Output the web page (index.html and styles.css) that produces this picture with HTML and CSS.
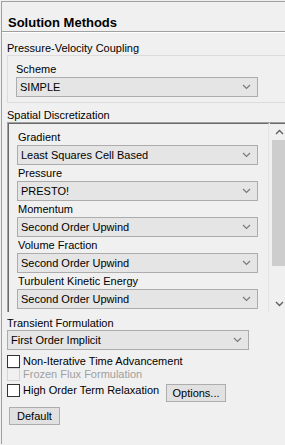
FILE: index.html
```html
<!DOCTYPE html>
<html lang="en">
<head>
  <meta charset="UTF-8" />
  <title>Solution Methods</title>
  <link rel="stylesheet" href="styles.css">
</head>
<body>
  <div class="page">
    <div class="title">Solution Methods</div>

    <div class="section-label">Pressure-Velocity Coupling</div>
    <div class="group">
      <div class="field-label">Scheme</div>
      <div class="combo wide"><span>SIMPLE</span><svg viewBox="0 0 9 6"><polyline points="1,1 4.5,4.5 8,1"/></svg></div>
    </div>

    <div class="section-label spatial">Spatial Discretization</div>
    <div class="scroll-panel">
      <div class="scroll-content">
        <div class="row-label">Gradient</div>
        <div class="combo"><span>Least Squares Cell Based</span><svg viewBox="0 0 9 6"><polyline points="1,1 4.5,4.5 8,1"/></svg></div>
        <div class="row-label">Pressure</div>
        <div class="combo"><span>PRESTO!</span><svg viewBox="0 0 9 6"><polyline points="1,1 4.5,4.5 8,1"/></svg></div>
        <div class="row-label">Momentum</div>
        <div class="combo"><span>Second Order Upwind</span><svg viewBox="0 0 9 6"><polyline points="1,1 4.5,4.5 8,1"/></svg></div>
        <div class="row-label">Volume Fraction</div>
        <div class="combo"><span>Second Order Upwind</span><svg viewBox="0 0 9 6"><polyline points="1,1 4.5,4.5 8,1"/></svg></div>
        <div class="row-label">Turbulent Kinetic Energy</div>
        <div class="combo"><span>Second Order Upwind</span><svg viewBox="0 0 9 6"><polyline points="1,1 4.5,4.5 8,1"/></svg></div>
      </div>
      <div class="scrollbar">
        <svg class="arrow" viewBox="0 0 9 6"><polyline points="1,5 4.5,1.5 8,5"/></svg>
        <div class="thumb"></div>
        <div class="track"></div>
        <svg class="arrow" viewBox="0 0 9 6"><polyline points="1,1 4.5,4.5 8,1"/></svg>
      </div>
    </div>

    <div class="section-label transient">Transient Formulation</div>
    <div class="combo wide plain"><span>First Order Implicit</span><svg viewBox="0 0 9 6"><polyline points="1,1 4.5,4.5 8,1"/></svg></div>

    <div class="checks">
      <label class="check"><span class="box"></span>Non-Iterative Time Advancement</label>
      <label class="check disabled"><span class="box"></span>Frozen Flux Formulation</label>
      <div class="check-row">
        <label class="check"><span class="box"></span>High Order Term Relaxation</label>
        <button class="btn options">Options...</button>
      </div>
    </div>
    <button class="btn default">Default</button>
  </div>
</body>
</html>
```

FILE: styles.css
```css
body {
  margin: 0;
  background: #f0f0f0;
  font-family: 'Liberation Sans', Arial, sans-serif;
  font-size: 11px;
  color: #000;
  overflow: hidden;
}
.page {
  margin: 1px 0 0 1px;
  border-top: 1px solid #a0a0a0;
  border-left: 1px solid #a0a0a0;
  padding-left: 5px;
  height: 442px;
}
.title {
  font-size: 13px;
  font-weight: bold;
  line-height: 16px;
  padding-top: 13px;
  margin-left: -5px;
  padding-left: 6px;
  border-bottom: 1px solid #a0a0a0;
  box-shadow: 0 1px 0 #fff;
}
.section-label {
  line-height: 14px;
  margin-top: 9px;
}
.section-label.spatial {
  margin-top: 5px;
}
.section-label.transient {
  margin-top: 4px;
}
.group {
  border: 1px solid #dcdcdc;
  border-right: none;
  padding: 6px 0 5px 8px;
}
.field-label {
  line-height: 14px;
}
.combo {
  display: flex;
  align-items: center;
  justify-content: space-between;
  box-sizing: border-box;
  height: 20px;
  width: 241px;
  background: #e5e5e5;
  border: 1px solid #acacac;
  padding: 0 6px 0 3px;
}
.combo.wide {
  width: 242px;
  margin-top: 1px;
}
.combo.plain {
  margin-top: 0;
}
.combo svg {
  width: 9px;
  height: 6px;
  fill: none;
  stroke: #7a7a7a;
  stroke-width: 1.2;
}
.scroll-panel {
  display: flex;
  height: 189px;
  border-top: 1px solid #a0a0a0;
  border-left: 1px solid #a0a0a0;
}
.scroll-content {
  box-sizing: border-box;
  width: 261px;
  padding: 5px 0 0 8px;
  border-top: 1px solid #696969;
  border-left: 1px solid #696969;
  border-right: 1px solid #e3e3e3;
  overflow: hidden;
}
.row-label {
  line-height: 16px;
  padding-left: 1px;
}
.scrollbar {
  display: flex;
  flex-direction: column;
  width: 15px;
  margin-left: 1px;
  border-top: 1px solid #696969;
}
.scrollbar .arrow {
  width: 9px;
  height: 6px;
  margin: 5px 0 5px 5px;
  fill: none;
  stroke: #606060;
  stroke-width: 1.4;
}
.thumb {
  margin-left: 2px;
  height: 126px;
  background: #cdcdcd;
}
.track {
  flex: 1;
}
.checks {
  margin-top: 5px;
}
.check {
  display: flex;
  align-items: center;
  height: 13px;
  line-height: 13px;
}
.check .box {
  box-sizing: border-box;
  width: 13px;
  height: 13px;
  border: 1px solid #333;
  background: #fff;
  margin-right: 3px;
}
.check.disabled {
  color: #a0a0a0;
}
.check.disabled .box {
  border-color: #d4d4d4;
  background: #f0f0f0;
}
.check-row {
  display: flex;
  align-items: flex-start;
  margin-top: 3px;
}
.check-row .check {
  width: 159px;
}
.btn {
  font-family: inherit;
  font-size: 11px;
  background: #e1e1e1;
  border: 1px solid #adadad;
  padding: 0;
  color: #000;
}
.options {
  width: 60px;
  height: 18px;
}
.default {
  display: block;
  width: 51px;
  height: 18px;
  margin: 5px 0 0 2px;
}
```
